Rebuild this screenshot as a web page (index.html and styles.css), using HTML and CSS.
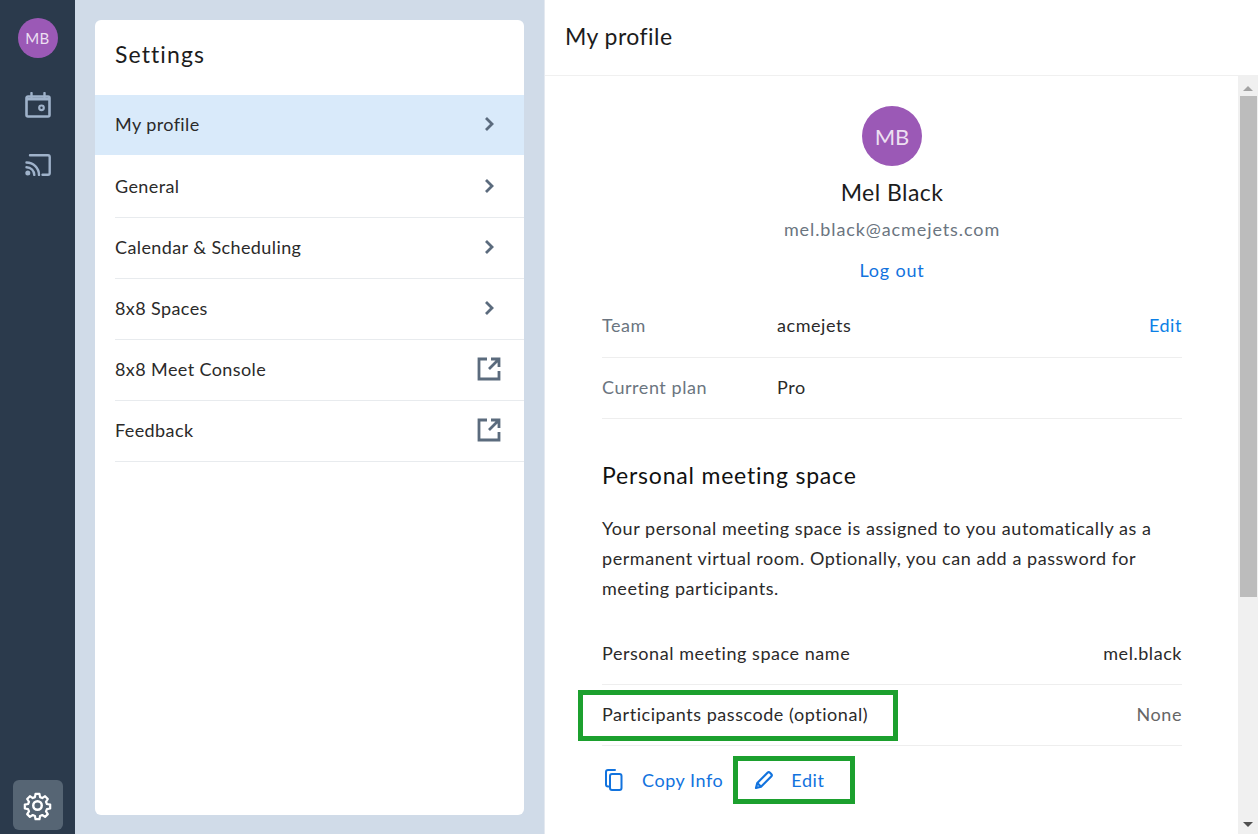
FILE: index.html
```html
<!DOCTYPE html>
<html lang="en">
<head>
    <meta charset="UTF-8">
    <meta name="viewport" content="width=device-width, initial-scale=1.0">
    <title>My profile</title>
    <link rel="stylesheet" href="styles.css">
</head>
<body>
    <nav class="rail">
        <div class="rail-avatar">MB</div>
        <svg class="rail-icon" viewBox="0 0 26 26" fill="none" stroke="#9fb2ca" stroke-width="2.600" stroke-linejoin="round">
            <path d="M3 4.500h20a1.500 1.500 0 0 1 1.500 1.500v17a1.500 1.500 0 0 1-1.500 1.500H3A1.500 1.500 0 0 1 1.500 23V6A1.500 1.500 0 0 1 3 4.500z"/>
            <path d="M1.500 7h23" stroke-width="3"/>
            <path d="M6.500 1v4M19.500 1v4" stroke-linecap="round" stroke-width="2.400"/>
            <circle cx="16.500" cy="15.800" r="2.300" stroke-width="2.200"/>
        </svg>
        <svg class="rail-icon cast" viewBox="0 0 26 22" fill="none" stroke="#9fb2ca" stroke-width="2.400" stroke-linecap="round">
            <path d="M5 1.300h18a1.700 1.700 0 0 1 1.700 1.700v16a1.700 1.700 0 0 1-1.700 1.700h-5.500"/>
            <path d="M1.500 8.500a12.500 12.500 0 0 1 12.500 12.500M1.500 13.200a7.800 7.800 0 0 1 7.800 7.800"/>
            <circle cx="2.800" cy="19" r="2.500" fill="#9fb2ca" stroke="none"/>
        </svg>
        <div class="rail-spacer"></div>
        <div class="rail-settings">
            <svg viewBox="0 0 24 24" width="31" height="31" fill="none" stroke="#fff" stroke-width="1.900" stroke-linejoin="round">
                <path d="M10.300 2h3.400l.5 2.800 1.900.8 2.400-1.600 2.400 2.400-1.600 2.400.8 1.900 2.800.5v3.400l-2.800.5-.8 1.900 1.600 2.400-2.400 2.400-2.400-1.600-1.900.8-.5 2.800h-3.400l-.5-2.800-1.900-.8-2.400 1.600-2.400-2.400 1.600-2.400-.8-1.900-2.800-.5v-3.400l2.800-.5.8-1.900-1.600-2.400 2.400-2.400 2.400 1.600 1.900-.8z" transform="translate(1.200 1.200) scale(.9)"/>
                <circle cx="12" cy="12" r="3.300"/>
            </svg>
        </div>
    </nav>

    <aside class="side">
        <div class="card">
            <h1 class="card-title">Settings</h1>
            <ul class="menu">
                <li class="menu-item active"><span>My profile</span>
                    <svg class="chevron" viewBox="0 0 10 16"><path d="M2 2l6 6-6 6"/></svg></li>
                <li class="menu-item"><span>General</span>
                    <svg class="chevron" viewBox="0 0 10 16"><path d="M2 2l6 6-6 6"/></svg></li>
                <li class="menu-item"><span>Calendar &amp; Scheduling</span>
                    <svg class="chevron" viewBox="0 0 10 16"><path d="M2 2l6 6-6 6"/></svg></li>
                <li class="menu-item"><span>8x8 Spaces</span>
                    <svg class="chevron" viewBox="0 0 10 16"><path d="M2 2l6 6-6 6"/></svg></li>
                <li class="menu-item"><span>8x8 Meet Console</span>
                    <svg class="external" viewBox="0 0 24 24"><path d="M10 2H2v20h20v-8M12 12L21 3M14 2h8v8"/></svg></li>
                <li class="menu-item"><span>Feedback</span>
                    <svg class="external" viewBox="0 0 24 24"><path d="M10 2H2v20h20v-8M12 12L21 3M14 2h8v8"/></svg></li>
            </ul>
        </div>
    </aside>

    <main class="main">
        <header class="main-header">My profile</header>
        <div class="main-body">
            <div class="content">
                <div class="profile">
                    <div class="profile-avatar">MB</div>
                    <div class="profile-name">Mel Black</div>
                    <div class="profile-email">mel.black@acmejets.com</div>
                    <a class="link profile-logout">Log out</a>
                </div>

                <div class="row team">
                    <span class="row-label muted">Team</span>
                    <span class="row-value">acmejets</span>
                    <a class="link bright">Edit</a>
                </div>
                <div class="row">
                    <span class="row-label muted">Current plan</span>
                    <span class="row-value">Pro</span>
                </div>

                <h2 class="section-title">Personal meeting space</h2>
                <p class="section-text">Your personal meeting space is assigned to you automatically as a permanent virtual room. Optionally, you can add a password for meeting participants.</p>

                <div class="row spread">
                    <span>Personal meeting space name</span>
                    <span>mel.black</span>
                </div>
                <div class="row spread">
                    <span class="highlight-wrap">Participants passcode (optional)<i class="highlight passcode"></i></span>
                    <span class="muted-dark">None</span>
                </div>

                <div class="actions">
                    <a class="link action">
                        <svg class="action-icon" viewBox="0 0 18 22" fill="none" stroke="#1273de" stroke-width="2" stroke-linejoin="round">
                            <path d="M3.500 17.500H3a2 2 0 0 1-2-2V3a2 2 0 0 1 2-2h7" stroke-linecap="round"/>
                            <rect x="5" y="5" width="11.500" height="16" rx="2"/>
                        </svg>
                        Copy Info
                    </a>
                    <a class="link action edit">
                        <svg class="action-icon" viewBox="0 0 20 20" fill="none" stroke="#1273de" stroke-width="2.200" stroke-linejoin="round">
                            <path d="M2 18l1.300-5L13.500 2.800a1.800 1.800 0 0 1 2.500 0l1.200 1.200a1.800 1.800 0 0 1 0 2.500L7 16.700z"/>
                            <path d="M3.300 13L7 16.700"/>
                        </svg>
                        Edit
                        <i class="highlight edit-box"></i>
                    </a>
                </div>
            </div>
            <div class="scrollbar">
                <span class="arrow up"></span>
                <div class="thumb"></div>
                <span class="arrow down"></span>
            </div>
        </div>
    </main>
</body>
</html>
```

FILE: styles.css
```css
* {
    box-sizing: border-box;
}

html, body {
    height: 100%;
}

body {
    margin: 0;
    display: flex;
    height: 834px;
    overflow: hidden;
    font-family: 'Lato', 'Open Sans', sans-serif;
    font-size: 18px;
    letter-spacing: 0.55px;
    color: #2b2a2a;
    background-color: #fff;
}

/* left rail */
.rail {
    width: 75px;
    flex: none;
    display: flex;
    flex-direction: column;
    align-items: center;
    padding-top: 18px;
    background-color: #2b3a4c;
}

.rail-avatar {
    width: 40px;
    height: 40px;
    border-radius: 50%;
    background-color: #9b59b6;
    color: #ecdff1;
    font-size: 15px;
    display: flex;
    align-items: center;
    justify-content: center;
}

.rail-icon {
    width: 26px;
    height: 26px;
    margin-top: 34px;
}

.rail-icon.cast {
    width: 26px;
    height: 22px;
    margin-top: 36px;
}

.rail-spacer {
    flex: 1;
}

.rail-settings {
    width: 50px;
    height: 50px;
    margin-bottom: 4px;
    border-radius: 6px;
    background-color: #566574;
    display: flex;
    align-items: center;
    justify-content: center;
}

/* settings column */
.side {
    width: 470px;
    flex: none;
    padding: 20px 20px 19px 20px;
    background-color: #d0dbe8;
    border-right: 1px solid #e4e9f0;
}

.card {
    height: 100%;
    border-radius: 6px;
    background-color: #fff;
    overflow: hidden;
}

.card-title {
    margin: 0;
    height: 75px;
    padding-left: 20px;
    line-height: 68px;
    font-size: 23px;
    font-weight: 400;
    letter-spacing: 1.1px;
    color: #1c1c1c;
}

.menu {
    list-style: none;
    margin: 0;
    padding: 0;
    letter-spacing: 0.4px;
}

.menu-item {
    height: 61px;
    margin-left: 20px;
    padding-right: 23px;
    padding-bottom: 3px;
    display: flex;
    align-items: center;
    justify-content: space-between;
    border-bottom: 1px solid #e8ebee;
}

.menu-item.active {
    height: 62px;
    margin-left: 0;
    padding-left: 20px;
    padding-bottom: 2px;
    border-bottom: 2px solid #fff;
    background-color: #d9eafa;
    background-clip: padding-box;
}

.chevron {
    width: 10px;
    height: 16px;
    margin-right: 7px;
    fill: none;
    stroke: #5b6b7d;
    stroke-width: 2.800;
}

.external {
    width: 24px;
    height: 24px;
    fill: none;
    stroke: #5b6b7d;
    stroke-width: 2.800;
}

/* main column */
.main {
    flex: 1;
    min-width: 0;
    display: flex;
    flex-direction: column;
}

.main-header {
    height: 76px;
    padding-left: 20px;
    line-height: 73px;
    font-size: 23px;
    letter-spacing: 0.45px;
    color: #1c1c1c;
    border-bottom: 1px solid #f0f0f0;
}

.main-body {
    flex: 1;
    display: flex;
    min-height: 0;
    overflow: hidden;
}

.content {
    flex: 1;
    padding: 30px 56px 0 57px;
}

.profile {
    display: flex;
    flex-direction: column;
    align-items: center;
}

.profile-avatar {
    width: 60px;
    height: 60px;
    border-radius: 50%;
    background-color: #9b59b6;
    color: #ecdff1;
    font-size: 22px;
    letter-spacing: 0;
    display: flex;
    align-items: center;
    justify-content: center;
}

.profile-name {
    margin-top: 11px;
    line-height: 30px;
    font-size: 23px;
    letter-spacing: 0.45px;
    color: #1c1c1c;
}

.profile-email {
    margin-top: 7px;
    line-height: 30px;
    letter-spacing: 0.9px;
    color: #6b7580;
}

.profile-logout {
    margin-top: 11px;
    line-height: 30px;
    letter-spacing: 0.8px;
}

.link {
    color: #1273de;
}

.bright {
    margin-left: auto;
    color: #0b80e6;
}

.row {
    height: 61px;
    padding-bottom: 2px;
    display: flex;
    align-items: center;
    border-bottom: 1px solid #eeeeee;
}

.row.team {
    height: 63px;
    margin-top: 10px;
    padding-bottom: 3px;
}

.row-label {
    width: 175px;
}

.muted {
    color: #6b7580;
}

.muted-dark {
    color: #666;
}

.row.spread {
    justify-content: space-between;
}

.section-title {
    margin: 40px 0 0;
    line-height: 32px;
    font-size: 23px;
    font-weight: 400;
    letter-spacing: 0.8px;
    color: #111;
}

.section-text {
    margin: 22px 0 21px;
    line-height: 30px;
    color: #2b2a2a;
}

.highlight-wrap {
    position: relative;
}

.highlight {
    position: absolute;
    border: 5px solid #1ca02e;
    pointer-events: none;
}

.passcode {
    left: -24px;
    top: -13px;
    width: 320px;
    height: 51px;
}

.actions {
    display: flex;
    align-items: center;
    height: 68px;
}

.action {
    position: relative;
    display: flex;
    align-items: center;
}

.action-icon {
    width: 18px;
    height: 22px;
    margin: 0 19px 0 3px;
}

.action.edit {
    margin-left: 31px;
}

.action.edit .action-icon {
    width: 20px;
    height: 20px;
    margin: 0 17px 0 0;
}

.edit-box {
    left: -21px;
    top: -13px;
    width: 122px;
    height: 48px;
}

/* drawn scrollbar */
.scrollbar {
    width: 20px;
    flex: none;
    display: flex;
    flex-direction: column;
    align-items: center;
    background-color: #f0f0f0;
}

.thumb {
    width: 17px;
    height: 501px;
    margin-top: 5px;
    margin-bottom: auto;
    background-color: #bcbcbc;
}

.arrow {
    width: 0;
    height: 0;
    border-left: 5px solid transparent;
    border-right: 5px solid transparent;
}

.arrow.up {
    margin-top: 10px;
    border-bottom: 5px solid #a3a3a3;
}

.arrow.down {
    margin-bottom: 7px;
    border-top: 5px solid #505050;
}
```
